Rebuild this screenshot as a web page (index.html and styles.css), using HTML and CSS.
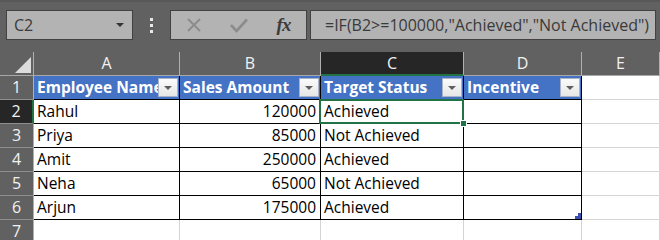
FILE: index.html
```html
<!DOCTYPE html>
<html>
<head>
<meta charset="utf-8">
<link rel="stylesheet" href="styles.css">
</head>
<body>
<div class="toolbar">
  <div class="namebox"><span>C2</span><span class="caret"></span></div>
  <div class="grip"><i></i><i></i><i></i></div>
  <div class="fbtns">
    <span class="slot"><svg width="16" height="16" viewBox="0 0 16 16"><path d="M2 2 L14 14 M14 2 L2 14" stroke="#8c8c8c" stroke-width="2" fill="none"/></svg></span>
    <span class="slot"><svg width="18" height="15" viewBox="0 0 18 15"><path d="M1 7 L6.5 13 L17 1.5" stroke="#8c8c8c" stroke-width="2.6" fill="none"/></svg></span>
    <span class="slot fx">fx</span>
  </div>
  <div class="formula">=IF(B2&gt;=100000,"Achieved","Not Achieved")</div>
</div>
<div class="sheet">
  <div class="corner"><svg width="16" height="16" viewBox="0 0 16 16"><polygon points="16,0 16,16 0,16" fill="#dcdcdc"/></svg></div>
  <div class="ch">A</div>
  <div class="ch">B</div>
  <div class="ch sel">C</div>
  <div class="ch">D</div>
  <div class="ch">E</div>

  <div class="rh">1</div>
  <div class="cell t hd"><span class="lbl">Employee Name</span><span class="fb"></span></div>
  <div class="cell t hd"><span class="lbl">Sales Amount</span><span class="fb"></span></div>
  <div class="cell t hd"><span class="lbl">Target Status</span><span class="fb"></span></div>
  <div class="cell t hd"><span class="lbl">Incentive</span><span class="fb"></span></div>
  <div class="cell"></div>

  <div class="rh sel">2</div>
  <div class="cell t">Rahul</div>
  <div class="cell t num">120000</div>
  <div class="cell t active">Achieved<span class="handle"></span></div>
  <div class="cell t"></div>
  <div class="cell"></div>

  <div class="rh">3</div>
  <div class="cell t">Priya</div>
  <div class="cell t num">85000</div>
  <div class="cell t">Not Achieved</div>
  <div class="cell t"></div>
  <div class="cell"></div>

  <div class="rh">4</div>
  <div class="cell t">Amit</div>
  <div class="cell t num">250000</div>
  <div class="cell t">Achieved</div>
  <div class="cell t"></div>
  <div class="cell"></div>

  <div class="rh">5</div>
  <div class="cell t">Neha</div>
  <div class="cell t num">65000</div>
  <div class="cell t">Not Achieved</div>
  <div class="cell t"></div>
  <div class="cell"></div>

  <div class="rh">6</div>
  <div class="cell t">Arjun</div>
  <div class="cell t num">175000</div>
  <div class="cell t">Achieved</div>
  <div class="cell t last"><svg class="resize" width="6" height="6" viewBox="0 0 6 6"><polygon points="3,0 6,0 6,6 0,6 0,3 3,3" fill="#3d4fae"/></svg></div>
  <div class="cell"></div>

  <div class="rh">7</div>
  <div class="cell"></div>
  <div class="cell"></div>
  <div class="cell"></div>
  <div class="cell"></div>
  <div class="cell"></div>
</div>
</body>
</html>
```
FILE: styles.css
```css
* { box-sizing: border-box; }
html, body { margin: 0; }
body {
  width: 660px;
  height: 240px;
  overflow: hidden;
  background: #616161;
  font-family: "Open Sans", "Liberation Sans", sans-serif;
}
.toolbar {
  height: 52px;
  display: flex;
  align-items: flex-start;
  padding: 10px 4px 0 6px;
  box-shadow: inset 0 2px 0 #585858;
}
.namebox {
  width: 127px;
  height: 30px;
  background: #b3b3b3;
  border: 1px solid #424242;
  display: flex;
  align-items: center;
  justify-content: space-between;
  padding: 0 8px 0 7px;
  font-size: 16px;
  color: #3a3a3a;
}
.caret {
  width: 0;
  height: 0;
  border-left: 4px solid transparent;
  border-right: 4px solid transparent;
  border-top: 4px solid #333;
}
.grip {
  width: 37px;
  height: 30px;
  display: flex;
  flex-direction: column;
  align-items: center;
  justify-content: center;
  gap: 3px;
}
.grip i {
  display: block;
  width: 3px;
  height: 3px;
  background: #e8e8e8;
}
.fbtns {
  width: 137px;
  height: 30px;
  background: #b3b3b3;
  border: 1px solid #424242;
  display: flex;
  align-items: center;
}
.slot {
  width: 45px;
  display: flex;
  justify-content: center;
  align-items: center;
}
.fx {
  font-family: "Liberation Serif", serif;
  font-style: italic;
  font-weight: 700;
  font-size: 19px;
  color: #3c3c3c;
  letter-spacing: -1px;
}
.formula {
  flex: 1;
  margin-left: 3px;
  height: 30px;
  background: #b3b3b3;
  border: 1px solid #424242;
  padding-left: 14px;
  font-size: 16px;
  line-height: 28px;
  color: #3a3a3a;
  white-space: nowrap;
  overflow: hidden;
}
.sheet {
  display: grid;
  grid-template-columns: 34px 146px 141px 143px 118px 1fr;
  grid-auto-rows: 24px;
}
.corner {
  border-right: 1px solid #b0b0b0;
  border-bottom: 1px solid #a8a8a8;
  display: flex;
  justify-content: flex-end;
  align-items: flex-end;
  padding: 0 2px 2px 0;
}
.ch {
  border-right: 1px solid #b0b0b0;
  border-bottom: 1px solid #a8a8a8;
  color: #f2f2f2;
  font-size: 16px;
  line-height: 23px;
  text-align: center;
}
.ch.sel {
  background: #262626;
  border-bottom: 2px solid #217346;
}
.rh {
  border-right: 1px solid #b0b0b0;
  border-bottom: 1px solid #8e8e8e;
  color: #f2f2f2;
  font-size: 16px;
  line-height: 23px;
  text-align: center;
}
.rh.sel {
  background: #262626;
  border-right: 2px solid #217346;
}
.cell {
  background: #fff;
  border-right: 1px solid #d4d4d4;
  border-bottom: 1px solid #d4d4d4;
  padding: 0 3px;
  font-size: 15.5px;
  line-height: 23px;
  color: #000;
  white-space: nowrap;
}
.cell.t {
  border-right-color: #000;
  border-bottom-color: #000;
}
.num { text-align: right; padding-right: 4px; }
.hd {
  background: #4472c4;
  color: #fff;
  font-weight: 700;
  display: flex;
  align-items: center;
  padding-right: 1px;
}
.lbl {
  flex: 1;
  min-width: 0;
  overflow: hidden;
}
.fb {
  flex: none;
  width: 20px;
  height: 19px;
  border: 1px solid #aab4c6;
  background: linear-gradient(#fbfbfb, #e6e6e6);
  display: flex;
  align-items: center;
  justify-content: center;
}
.fb::before {
  content: "";
  width: 0;
  height: 0;
  border-left: 4px solid transparent;
  border-right: 4px solid transparent;
  border-top: 4px solid #5e5e5e;
}
.active { position: relative; }
.active::after {
  content: "";
  position: absolute;
  left: -2px;
  top: -1px;
  right: -1px;
  bottom: -1px;
  border: 2px solid #217346;
}
.handle {
  position: absolute;
  right: -4px;
  bottom: -4px;
  width: 7px;
  height: 7px;
  background: #217346;
  border: 1px solid #fff;
  z-index: 1;
}
.last { position: relative; }
.resize {
  position: absolute;
  right: 0;
  bottom: 0;
}
```
